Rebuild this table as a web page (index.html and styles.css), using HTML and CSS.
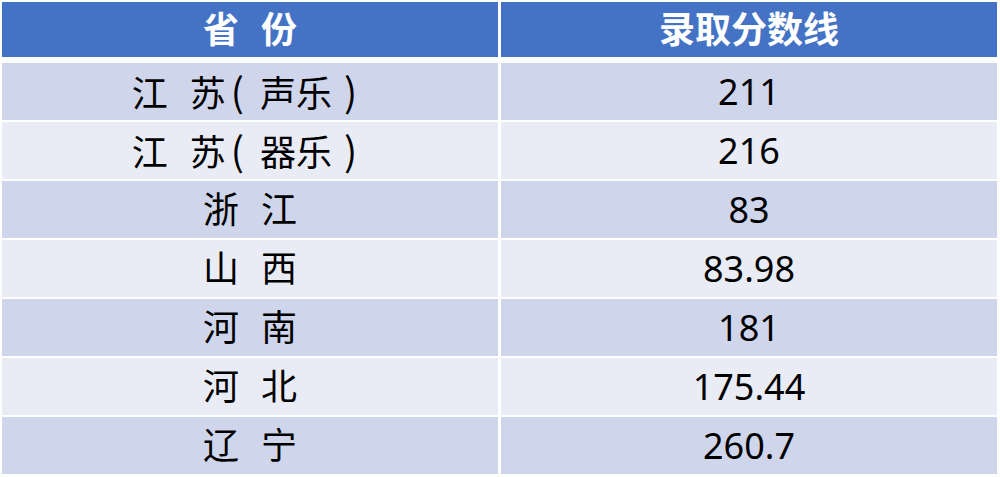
FILE: index.html
```html
<!DOCTYPE html>
<html lang="zh-CN">
<head>
<meta charset="utf-8">
<title>录取分数线</title>
<link rel="stylesheet" href="styles.css">
</head>
<body>
<div class="score-table">
  <div class="head">
    <div class="cell"><span class="txt">省 份</span></div>
    <div class="cell"><span class="txt">录取分数线</span></div>
  </div>
  <div class="rows">
    <div class="cell odd"><span class="txt">江 苏<span class="lp">(</span>声乐<span class="rp">)</span></span></div><div class="cell odd"><span class="txt">211</span></div>
    <div class="cell even"><span class="txt">江 苏<span class="lp">(</span>器乐<span class="rp">)</span></span></div><div class="cell even"><span class="txt">216</span></div>
    <div class="cell odd"><span class="txt">浙 江</span></div><div class="cell odd"><span class="txt">83</span></div>
    <div class="cell even"><span class="txt">山 西</span></div><div class="cell even"><span class="txt">83.98</span></div>
    <div class="cell odd"><span class="txt">河 南</span></div><div class="cell odd"><span class="txt">181</span></div>
    <div class="cell even"><span class="txt">河 北</span></div><div class="cell even"><span class="txt">175.44</span></div>
    <div class="cell odd"><span class="txt">辽 宁</span></div><div class="cell odd"><span class="txt">260.7</span></div>
  </div>
</div>
</body>
</html>
```

FILE: styles.css
```css
html, body {
  margin: 0;
  padding: 0;
  background: #ffffff;
}

body {
  width: 1000px;
  height: 477px;
  overflow: hidden;
  font-family: "Noto Sans", "Noto Sans CJK SC", sans-serif;
}

.score-table {
  margin: 2px 0 0 2px;
  width: 995px;
  display: flex;
  flex-direction: column;
  gap: 6px;
}

.head,
.rows {
  display: grid;
  grid-template-columns: 1fr 1fr;
  column-gap: 3px;
}

.head {
  height: 55px;
}

.rows {
  height: 411px;
  grid-template-rows: repeat(7, 1fr);
  row-gap: 2px;
}

.cell {
  display: flex;
  align-items: center;
  justify-content: center;
  font-size: 36px;
  line-height: 1;
  word-spacing: 12.6px;
  color: #000000;
  white-space: pre;
}

.txt {
  line-height: 1;
}

.lp,
.rp {
  font-family: "Noto Sans CJK SC", sans-serif;
  font-size: 39px;
  line-height: 1;
}

.lp {
  margin-left: 5px;
  margin-right: 16px;
}

.rp {
  margin-left: 12px;
  margin-right: 11px;
}

.head .cell {
  background: #4472c4;
  color: #ffffff;
  font-weight: 700;
}

.odd {
  background: #cfd5ea;
}

.even {
  background: #e9ebf5;
}
```
